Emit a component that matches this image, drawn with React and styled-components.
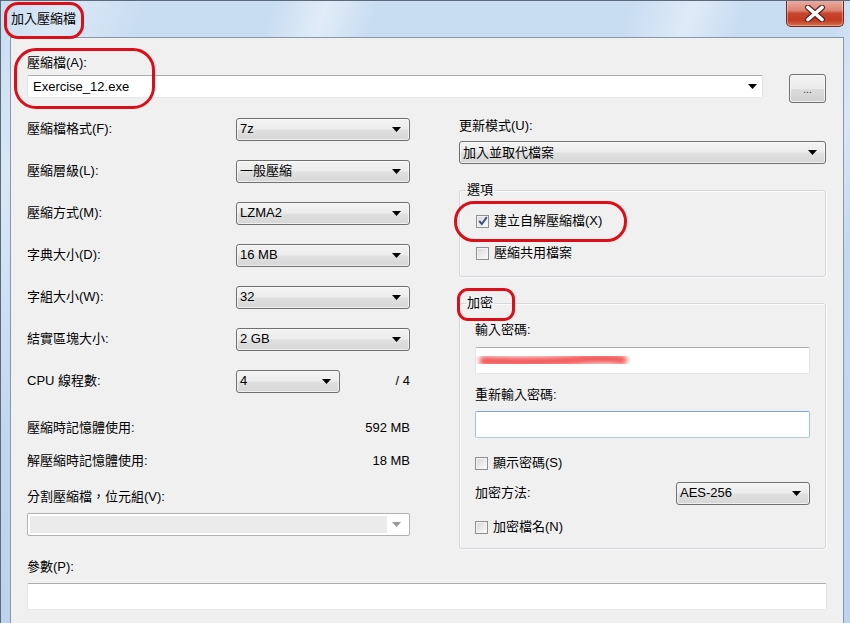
import React from "react";
import styled, { createGlobalStyle } from "styled-components";

const FONT = `"Liberation Sans", "Noto Sans CJK TC", sans-serif`;

const GlobalStyle = createGlobalStyle`
  html, body { margin: 0; padding: 0; background: #c4d9f0; }
  body { font-family: ${FONT}; font-size: 13px; color: #000; }
  * { box-sizing: border-box; }
`;

/* ---------- window chrome ---------- */

const Window = styled.div`
  position: relative;
  width: 850px;
  height: 623px;
  overflow: hidden;
  display: flex;
  flex-direction: column;
  border-left: 1px solid #5c6a7a;
  border-top: 1px solid #5c6a7a;
  background:
    linear-gradient(108deg,
      rgba(255,255,255,0) 0%, rgba(255,255,255,0.35) 6%, rgba(255,255,255,0) 14%,
      rgba(255,255,255,0) 26%, rgba(255,255,255,0.45) 31%, rgba(255,255,255,0) 36%,
      rgba(255,255,255,0) 60%, rgba(255,255,255,0.4) 66%, rgba(255,255,255,0) 71%,
      rgba(255,255,255,0) 80%, rgba(255,255,255,0.35) 84%, rgba(255,255,255,0) 88%),
    linear-gradient(180deg, #c9ddf2 0%, #bcd4ee 100%);
`;

const TitleBar = styled.div`
  height: 36px;
  display: flex;
  align-items: flex-start;
  flex-shrink: 0;
`;

const Title = styled.div`
  margin: 10px 0 0 10px;
  font-size: 13px;
  line-height: 16px;
  color: #000;
`;

const CloseButton = styled.div`
  margin-left: auto;
  margin-right: 6px;
  margin-top: -1px;
  width: 58px;
  height: 27px;
  display: flex;
  align-items: center;
  justify-content: center;
  border: 1px solid #6f2b22;
  border-top: none;
  border-radius: 0 0 5px 5px;
  background: linear-gradient(180deg, #eab0a4 0%, #dc8472 40%, #c8442c 52%, #c23c22 78%, #d8704e 100%);
  box-shadow: inset 0 0 0 1px rgba(255, 255, 255, 0.35);
`;

const Client = styled.div`
  flex: 1;
  margin: 0 6px 0 9px;
  border: 1px solid #8798ab;
  border-bottom: none;
  background: #f0f0f0;
  padding: 0 16px;
  display: flex;
  flex-direction: column;
`;

/* ---------- text ---------- */

const Label = styled.div`
  line-height: 16px;
  white-space: nowrap;
  margin-top: ${(p) => p.$mt || 0}px;
`;

/* ---------- controls ---------- */

const TextBox = styled.div`
  height: ${(p) => p.$h || 27}px;
  margin-top: ${(p) => p.$mt || 0}px;
  flex: ${(p) => (p.$grow ? 1 : "none")};
  background: #fff;
  border: 1px solid;
  border-color: ${(p) =>
    p.$focus ? "#7fa6cf #a3c0de #b3cde6 #a3c0de" : "#abadb3 #e2e3ea #e3e9ef #e2e3ea"};
  border-radius: 2px;
  display: flex;
  align-items: center;
  padding: 0 5px;
  position: relative;
`;

const ComboArrow = styled.svg`
  margin-left: auto;
  flex-shrink: 0;
`;

const Arrow = ({ color = "#000" }) => (
  <ComboArrow width="9" height="5" viewBox="0 0 9 5">
    <polygon points="0,0 9,0 4.5,5" fill={color} />
  </ComboArrow>
);

const SelectBox = styled.div`
  height: 23px;
  width: ${(p) => (p.$w ? `${p.$w}px` : "100%")};
  margin-top: ${(p) => p.$mt || 0}px;
  border: 1px solid #707070;
  border-radius: 3px;
  background: linear-gradient(180deg, #f3f3f3 0%, #ececec 48%, #e0e0e0 52%, #d6d6d6 100%);
  box-shadow: inset 0 0 0 1px rgba(255, 255, 255, 0.6);
  display: flex;
  align-items: center;
  padding: 0 8px 0 3px;
  line-height: 16px;
  white-space: nowrap;
  flex-shrink: 0;
`;

const Select = ({ value, w, mt }) => (
  <SelectBox $w={w} $mt={mt}>
    <span>{value}</span>
    <Arrow />
  </SelectBox>
);

const DisabledCombo = styled.div`
  height: 23px;
  margin-top: 8px;
  background: #fff;
  border: 1px solid #adb2b5;
  border-radius: 2px;
  display: flex;
  align-items: center;
  padding: 2px 8px 2px 2px;
`;

const DisabledField = styled.div`
  height: 100%;
  width: 357px;
  background: #ebebeb;
`;

const DotsButton = styled.div`
  width: 37px;
  height: 29px;
  margin-right: 1px;
  border: 1px solid #707070;
  border-radius: 3px;
  background: linear-gradient(180deg, #f2f2f2 0%, #ebebeb 50%, #dddddd 51%, #cfcfcf 100%);
  box-shadow: inset 0 0 0 1px rgba(255, 255, 255, 0.7);
  display: flex;
  align-items: center;
  justify-content: center;
  font-size: 10px;
  line-height: 10px;
  padding-top: 3px;
  color: #333;
`;

const CheckRow = styled.div`
  height: ${(p) => p.$h || 32}px;
  margin-top: ${(p) => p.$mt || 0}px;
  display: flex;
  align-items: center;
  gap: 5px;
  line-height: 16px;
  white-space: nowrap;
`;

const Box = styled.div`
  width: 13px;
  height: 13px;
  flex-shrink: 0;
  border: 1px solid #8e8f8f;
  background: linear-gradient(135deg, #d6d6d6 0%, #eeeeee 60%, #fbfbfb 100%);
  box-shadow: inset 0 0 0 1px #f4f4f4;
  display: flex;
  align-items: center;
  justify-content: center;
`;

const CheckBox = ({ checked, children, mt, h }) => (
  <CheckRow $mt={mt} $h={h}>
    <Box>
      {checked && (
        <svg width="10" height="10" viewBox="0 0 10 10">
          <path d="M1.2 5 L3.8 8 L8.8 1.2" fill="none" stroke="#3b518c" strokeWidth="2" />
        </svg>
      )}
    </Box>
    <span>{children}</span>
  </CheckRow>
);

/* ---------- layout ---------- */

const ArchiveRow = styled.div`
  margin-top: 3px;
  display: flex;
  align-items: flex-start;
  gap: 26px;
`;

const Columns = styled.div`
  margin-top: 5px;
  display: grid;
  grid-template-columns: 383px 367px;
  column-gap: 49px;
  align-items: start;
`;

const Column = styled.div`
  display: flex;
  flex-direction: column;
`;

const SettingRow = styled.div`
  height: ${(p) => p.$h || 42}px;
  margin-top: ${(p) => p.$mt || 0}px;
  display: flex;
  align-items: center;
  line-height: 16px;
  white-space: nowrap;
`;

const RowLabel = styled.span`
  flex: 1;
`;

const Control = styled.div`
  width: ${(p) => p.$w}px;
  display: flex;
  align-items: center;
`;

const Suffix = styled.span`
  flex: 1;
  text-align: right;
`;

const Value = styled.span`
  text-align: right;
`;

const Group = styled.fieldset`
  margin: ${(p) => p.$mt || 0}px 0 0 0;
  padding: 0;
  border: 1px solid #d5d8dc;
  border-radius: 3px;
  box-shadow: inset 1px 1px 0 #fafafa, 1px 1px 0 #fafafa;
  min-width: 0;
`;

const Legend = styled.legend`
  margin-left: 6px;
  padding: 0 1px;
  line-height: 16px;
`;

const GroupBody = styled.div`
  padding: ${(p) => p.$pt}px 15px ${(p) => p.$pb}px ${(p) => p.$pl || 15}px;
  display: flex;
  flex-direction: column;
`;

/* red call-out rings drawn over the dialog */
const Ring = styled.div`
  position: absolute;
  left: ${(p) => p.$x}px;
  top: ${(p) => p.$y}px;
  width: ${(p) => p.$w}px;
  height: ${(p) => p.$h}px;
  border: 3px solid #dc0f19;
  border-radius: ${(p) => p.$r}px;
  pointer-events: none;
`;

const Scribble = styled.svg`
  position: absolute;
  left: 0;
  top: 0;
`;

export default function App() {
  return (
    <>
      <GlobalStyle />
      <Window>
        <TitleBar>
          <Title>加入壓縮檔</Title>
          <CloseButton>
            <svg width="22" height="17" viewBox="0 0 22 17">
              <path d="M4 2.5 L18 14.5 M18 2.5 L4 14.5" stroke="#5e2620" strokeWidth="6" strokeLinecap="round" />
              <path d="M4 2.5 L18 14.5 M18 2.5 L4 14.5" stroke="#ffffff" strokeWidth="3.6" strokeLinecap="round" />
            </svg>
          </CloseButton>
        </TitleBar>

        <Client>
          <Label $mt={17}>壓縮檔(A):</Label>
          <ArchiveRow>
            <TextBox $h={23} $mt={1} $grow>
              <span>Exercise_12.exe</span>
              <Arrow />
            </TextBox>
            <DotsButton>...</DotsButton>
          </ArchiveRow>

          <Columns>
            <Column>
              <SettingRow>
                <RowLabel>壓縮檔格式(F):</RowLabel>
                <Control $w={174}><Select value="7z" /></Control>
              </SettingRow>
              <SettingRow>
                <RowLabel>壓縮層級(L):</RowLabel>
                <Control $w={174}><Select value="一般壓縮" /></Control>
              </SettingRow>
              <SettingRow>
                <RowLabel>壓縮方式(M):</RowLabel>
                <Control $w={174}><Select value="LZMA2" /></Control>
              </SettingRow>
              <SettingRow>
                <RowLabel>字典大小(D):</RowLabel>
                <Control $w={174}><Select value="16 MB" /></Control>
              </SettingRow>
              <SettingRow>
                <RowLabel>字組大小(W):</RowLabel>
                <Control $w={174}><Select value="32" /></Control>
              </SettingRow>
              <SettingRow>
                <RowLabel>結實區塊大小:</RowLabel>
                <Control $w={174}><Select value="2 GB" /></Control>
              </SettingRow>
              <SettingRow>
                <RowLabel>CPU 線程數:</RowLabel>
                <Control $w={174}>
                  <Select value="4" w={104} />
                  <Suffix>/ 4</Suffix>
                </Control>
              </SettingRow>

              <SettingRow $h={33} $mt={9}>
                <RowLabel>壓縮時記憶體使用:</RowLabel>
                <Value>592 MB</Value>
              </SettingRow>
              <SettingRow $h={33}>
                <RowLabel>解壓縮時記憶體使用:</RowLabel>
                <Value>18 MB</Value>
              </SettingRow>

              <Label $mt={12}>分割壓縮檔，位元組(V):</Label>
              <DisabledCombo>
                <DisabledField />
                <Arrow color="#9a9a9a" />
              </DisabledCombo>
            </Column>

            <Column>
              <Label $mt={10}>更新模式(U):</Label>
              <Select value="加入並取代檔案" mt={7} />

              <Group $mt={18}>
                <Legend>選項</Legend>
                <GroupBody $pt={7} $pb={7} $pl={16}>
                  <CheckBox checked>建立自解壓縮檔(X)</CheckBox>
                  <CheckBox>壓縮共用檔案</CheckBox>
                </GroupBody>
              </Group>

              <Group $mt={18}>
                <Legend>加密</Legend>
                <GroupBody $pt={11} $pb={6}>
                  <Label>輸入密碼:</Label>
                  <TextBox $mt={9}>
                    <Scribble width="160" height="25" viewBox="0 0 160 25">
                      <defs>
                        <filter id="smudge" x="-10%" y="-60%" width="120%" height="220%">
                          <feGaussianBlur stdDeviation="2.6" />
                        </filter>
                      </defs>
                      <path
                        d="M8 13 C40 14 80 14 110 11 C126 10 136 10 146 12"
                        fill="none"
                        stroke="#f2403f"
                        strokeWidth="10"
                        strokeLinecap="round"
                        filter="url(#smudge)"
                        opacity="0.85"
                      />
                    </Scribble>
                  </TextBox>
                  <Label $mt={13}>重新輸入密碼:</Label>
                  <TextBox $mt={8} $focus />
                  <CheckBox mt={10} h={30}>顯示密碼(S)</CheckBox>
                  <SettingRow $h={30}>
                    <RowLabel>加密方法:</RowLabel>
                    <Select value="AES-256" w={134} />
                  </SettingRow>
                  <CheckBox mt={4} h={30}>加密檔名(N)</CheckBox>
                </GroupBody>
              </Group>
            </Column>
          </Columns>

          <Label $mt={10}>參數(P):</Label>
          <TextBox $mt={8} />
        </Client>

        <Ring $x={3} $y={1} $w={80} $h={37} $r={14} />
        <Ring $x={13} $y={47} $w={141} $h={61} $r={22} />
        <Ring $x={453} $y={200} $w={173} $h={41} $r={20} />
        <Ring $x={456} $y={287} $w={58} $h={33} $r={11} />
      </Window>
    </>
  );
}
